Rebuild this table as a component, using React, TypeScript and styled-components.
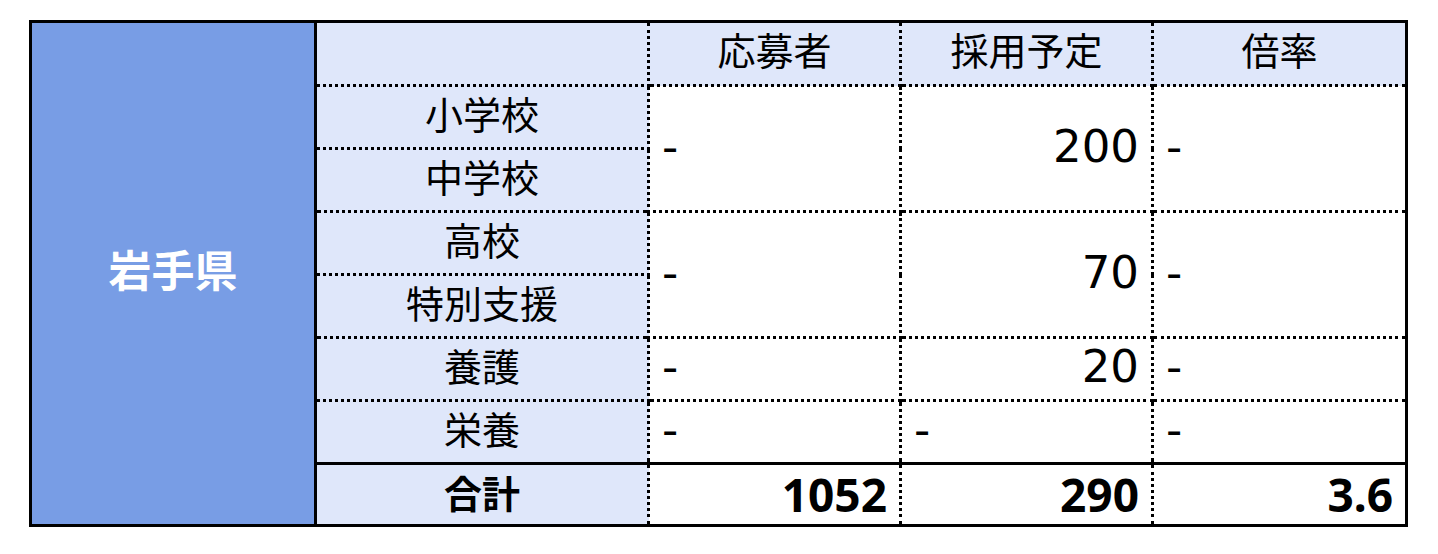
import React from "react";
import styled, { createGlobalStyle, css } from "styled-components";

const Global = createGlobalStyle`
  html, body { margin: 0; padding: 0; background: #ffffff; }
  body { font-family: "Noto Sans CJK JP", "Noto Sans", sans-serif; color: #000; }
`;

const Page = styled.div`
  padding: 20px 0 0 29px;
`;

const Table = styled.table`
  border-collapse: collapse;
  table-layout: fixed;
  width: 1376px;
  border: 3px solid #000;
`;

const Row = styled.tr<{ $h?: number }>`
  height: ${(p) => p.$h ?? 63}px;
`;

const Region = styled.th`
  width: 284px;
  background: #789de5;
  color: #ffffff;
  border: 3px solid #000;
  font-family: "Noto Sans CJK JP", sans-serif;
  font-weight: 700;
  font-size: 43px;
  line-height: 1;
  padding: 0 0 10px 0;
  text-align: center;
  vertical-align: middle;
`;

const Label = styled.td<{ $bold?: boolean; $topSolid?: boolean }>`
  background: #dfe7fa;
  border: 3px dotted #000;
  font-family: "Noto Sans CJK JP", sans-serif;
  font-size: 38px;
  font-weight: ${(p) => (p.$bold ? 700 : 400)};
  line-height: 1;
  padding: 0 0 9px 0;
  text-align: center;
  vertical-align: middle;
  ${(p) =>
    p.$topSolid &&
    css`
      border-top: 3px solid #000;
      padding-bottom: 6px;
    `}
`;

const Head = styled.th`
  background: #dfe7fa;
  border: 3px dotted #000;
  font-family: "Noto Sans CJK JP", sans-serif;
  font-size: 38px;
  font-weight: 400;
  line-height: 1;
  padding: 0 0 9px 0;
  text-align: center;
  vertical-align: middle;
`;

const Value = styled.td<{ $right?: boolean; $total?: boolean }>`
  background: #ffffff;
  border: 3px dotted #000;
  font-family: "DejaVu Sans", sans-serif;
  font-size: 45px;
  font-weight: 400;
  line-height: 1;
  padding: 0 12px 5px 12px;
  text-align: ${(p) => (p.$right ? "right" : "left")};
  vertical-align: middle;
  white-space: nowrap;
  ${(p) =>
    p.$total &&
    css`
      border-top: 3px solid #000;
      font-family: "Noto Sans", sans-serif;
      font-weight: 700;
      font-size: 46px;
      padding-bottom: 2px;
    `}
`;

export default function App() {
  return (
    <>
      <Global />
      <Page>
        <Table>
          <colgroup>
            <col style={{ width: 285 }} />
            <col style={{ width: 333 }} />
            <col style={{ width: 252 }} />
            <col style={{ width: 252 }} />
            <col style={{ width: 254 }} />
          </colgroup>
          <tbody>
            <Row $h={64}>
              <Region rowSpan={8}>岩手県</Region>
              <Label />
              <Head>応募者</Head>
              <Head>採用予定</Head>
              <Head>倍率</Head>
            </Row>
            <Row>
              <Label>小学校</Label>
              <Value rowSpan={2}>-</Value>
              <Value rowSpan={2} $right>
                200
              </Value>
              <Value rowSpan={2}>-</Value>
            </Row>
            <Row>
              <Label>中学校</Label>
            </Row>
            <Row>
              <Label>高校</Label>
              <Value rowSpan={2}>-</Value>
              <Value rowSpan={2} $right>
                70
              </Value>
              <Value rowSpan={2}>-</Value>
            </Row>
            <Row>
              <Label>特別支援</Label>
            </Row>
            <Row>
              <Label>養護</Label>
              <Value>-</Value>
              <Value $right>20</Value>
              <Value>-</Value>
            </Row>
            <Row>
              <Label>栄養</Label>
              <Value>-</Value>
              <Value>-</Value>
              <Value>-</Value>
            </Row>
            <Row $h={62}>
              <Label $bold $topSolid>
                合計
              </Label>
              <Value $right $total>
                1052
              </Value>
              <Value $right $total>
                290
              </Value>
              <Value $right $total>
                3.6
              </Value>
            </Row>
          </tbody>
        </Table>
      </Page>
    </>
  );
}
